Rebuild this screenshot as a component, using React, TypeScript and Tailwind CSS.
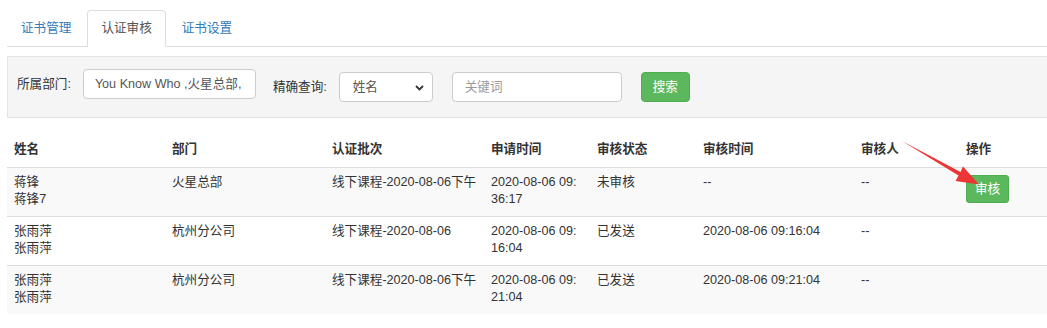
import React from "react";

const FONT = '"Liberation Sans", "Noto Sans CJK SC", sans-serif';

type Row = {
  name: string[];
  dept: string;
  batch: string;
  apply: string[];
  status: string;
  time: string;
  reviewer: string;
  action?: boolean;
  striped: boolean;
};

const rows: Row[] = [
  {
    name: ["蒋锋", "蒋锋7"],
    dept: "火星总部",
    batch: "线下课程-2020-08-06下午",
    apply: ["2020-08-06 09:", "36:17"],
    status: "未审核",
    time: "--",
    reviewer: "--",
    action: true,
    striped: true,
  },
  {
    name: ["张雨萍", "张雨萍"],
    dept: "杭州分公司",
    batch: "线下课程-2020-08-06",
    apply: ["2020-08-06 09:", "16:04"],
    status: "已发送",
    time: "2020-08-06 09:16:04",
    reviewer: "--",
    striped: false,
  },
  {
    name: ["张雨萍", "张雨萍"],
    dept: "杭州分公司",
    batch: "线下课程-2020-08-06下午",
    apply: ["2020-08-06 09:", "21:04"],
    status: "已发送",
    time: "2020-08-06 09:21:04",
    reviewer: "--",
    striped: true,
  },
];

const headers = ["姓名", "部门", "认证批次", "申请时间", "审核状态", "审核时间", "审核人", "操作"];
const widths = [158, 160, 159, 106, 106, 158, 105, 151];

export default function App() {
  return (
    <div
      className="relative w-[1047px] h-[328px] overflow-hidden bg-white text-[#333] text-[12.6px] leading-[17px]"
      style={{ fontFamily: FONT }}
    >
      <div className="w-[1110px] pl-[7px] pt-[10px]">
        {/* Tabs */}
        <div className="flex border-b border-[#ddd]">
          <div className="-mb-px mr-[2px] border border-transparent rounded-t-[4px] px-[13px] py-[9px] text-[#337ab7]">
            证书管理
          </div>
          <div className="-mb-px mr-[2px] border border-[#ddd] border-b-white bg-white rounded-t-[4px] px-[13px] py-[9px] text-[#555]">
            认证审核
          </div>
          <div className="-mb-px mr-[2px] border border-transparent rounded-t-[4px] px-[13px] py-[9px] text-[#337ab7]">
            证书设置
          </div>
        </div>

        {/* Filter box */}
        <div className="mt-[9px] h-[62px] border border-[#e3e3e3] bg-[#f5f5f5] pl-[9px] flex items-start">
          <div className="mt-[12px] flex items-center">
            <span>所属部门:</span>
            <div className="ml-[12px] w-[173px] h-[30px] rounded-[4px] border border-[#ccc] bg-white pl-[11px] pr-[3px] flex items-center overflow-hidden whitespace-nowrap text-[#555]">
              You Know Who ,火星总部,
            </div>
          </div>
          <div className="mt-[15px] ml-[17px] flex items-center">
            <span>精确查询:</span>
            <div className="ml-[12px] w-[94px] h-[30px] rounded-[4px] border border-[#ccc] bg-white pl-[13px] pr-[8px] flex items-center justify-between text-[#555]">
              <span>姓名</span>
              <svg width="9" height="6" viewBox="0 0 9 6" className="mt-[1px]">
                <path d="M1 1 L4.5 4.5 L8 1" fill="none" stroke="#333" strokeWidth="1.8" />
              </svg>
            </div>
            <div className="ml-[19px] w-[170px] h-[30px] rounded-[4px] border border-[#ccc] bg-white pl-[12px] flex items-center text-[#999]">
              关键词
            </div>
            <div className="ml-[19px] w-[49px] h-[30px] rounded-[4px] border border-[#4cae4c] bg-[#5cb85c] flex items-center justify-center text-white">
              搜索
            </div>
          </div>
        </div>

        {/* Table */}
        <table className="mt-[16px] table-fixed border-collapse w-[1103px]">
          <colgroup>
            {widths.map((w, i) => (
              <col key={i} style={{ width: w }} />
            ))}
          </colgroup>
          <thead>
            <tr className="border-b border-[#ddd]">
              {headers.map((h) => (
                <th key={h} className="text-left font-bold px-[7px] pt-[7px] pb-[9px]">
                  {h}
                </th>
              ))}
            </tr>
          </thead>
          <tbody>
            {rows.map((r, i) => (
              <tr
                key={i}
                className={`border-t border-[#ddd] align-top ${r.striped ? "bg-[#f9f9f9]" : "bg-white"}`}
              >
                <td className="px-[7px] pt-[6px] pb-[8px]">
                  {r.name[0]}
                  <br />
                  {r.name[1]}
                </td>
                <td className="px-[7px] pt-[6px] pb-[8px]">{r.dept}</td>
                <td className="px-[7px] pt-[6px] pb-[8px] whitespace-nowrap">{r.batch}</td>
                <td className="px-[7px] pt-[6px] pb-[8px] whitespace-nowrap">
                  {r.apply[0]}
                  <br />
                  {r.apply[1]}
                </td>
                <td className="px-[7px] pt-[6px] pb-[8px]">{r.status}</td>
                <td className="px-[7px] pt-[6px] pb-[8px] whitespace-nowrap">{r.time}</td>
                <td className="px-[7px] pt-[6px] pb-[8px]">{r.reviewer}</td>
                <td className="px-[7px] pt-[7px] pb-[8px]">
                  {r.action && (
                    <div className="w-[43px] h-[28px] rounded-[3px] border border-[#4cae4c] bg-[#5cb85c] flex items-center justify-center text-white">
                      审核
                    </div>
                  )}
                </td>
              </tr>
            ))}
          </tbody>
        </table>
      </div>

      {/* Red annotation arrow */}
      <svg
        className="absolute left-0 top-0 pointer-events-none"
        width="1047"
        height="328"
        viewBox="0 0 1047 328"
      >
        <polygon
          points="902,141 960.5,172 963,166.5 979,184.5 955.5,181 958.5,175.5"
          fill="#ec3535"
        />
      </svg>
    </div>
  );
}
